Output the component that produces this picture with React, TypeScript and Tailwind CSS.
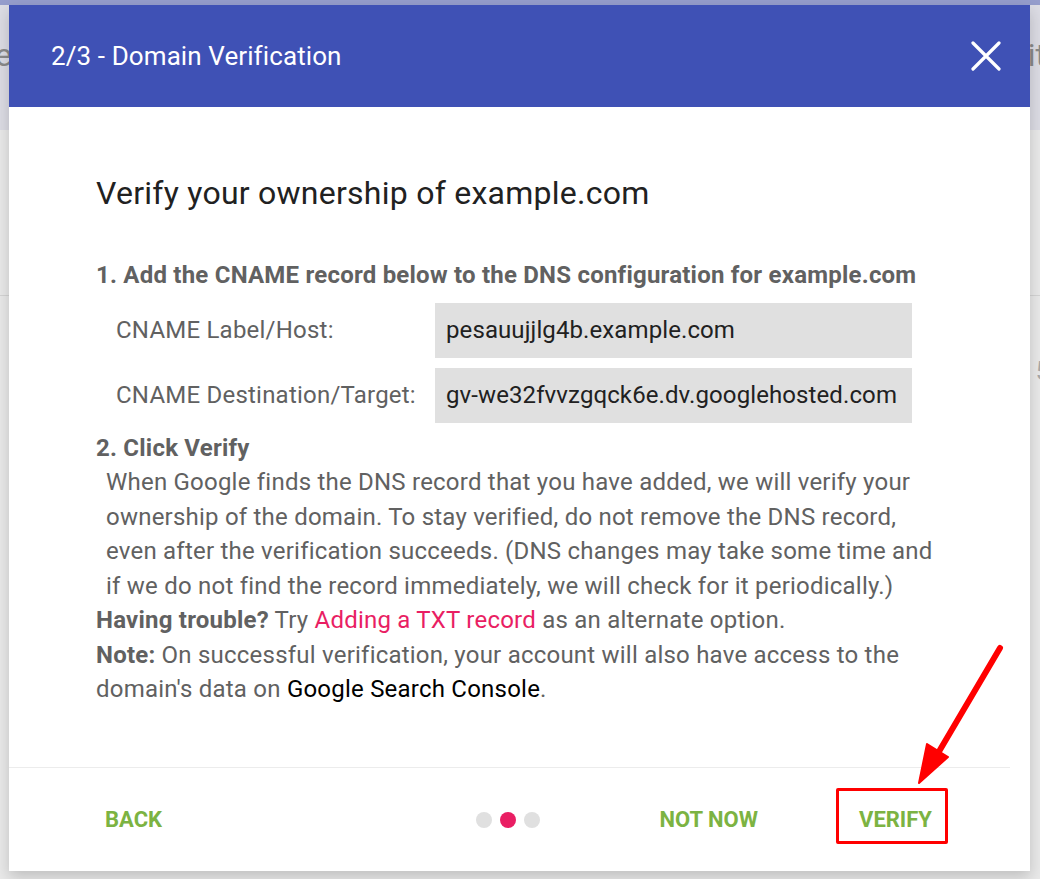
const steps = [0, 1, 2];

function CloseIcon() {
  return (
    <svg width="30" height="30" viewBox="0 0 30 30" fill="none">
      <path d="M2 2L28 28M28 2L2 28" stroke="white" strokeWidth="3.2" strokeLinecap="round" />
    </svg>
  );
}

export default function App() {
  return (
    <div className="relative w-[1040px] h-[879px] overflow-hidden bg-[#e9e9e9] font-['Roboto','Liberation_Sans',sans-serif]">
      {/* Dimmed page behind the dialog */}
      <div className="flex flex-col">
        <div className="h-[5px] bg-[#959dcc]" />
        <div className="h-[125px] bg-[#dcdce4] flex justify-between items-start pt-[32px] text-[32px] leading-[36px] text-[#8a8a8a]">
          <span className="ml-[-5px]">e</span>
          <span className="mr-[-6px]">it</span>
        </div>
        <div className="h-[165px]" />
        <div className="h-px bg-[#d4d4d4]" />
        <div className="flex justify-end pt-[56px] text-[26px] text-[#a8a8a8]">
          <span className="mr-[-10px]">5</span>
        </div>
      </div>

      {/* Dialog */}
      <div className="absolute left-[9px] top-[5px] w-[1021px] h-[866px] bg-white flex flex-col shadow-[0_6px_14px_rgba(0,0,0,0.18)]">
        <div className="h-[102px] shrink-0 bg-[#3f51b5] flex items-center justify-between pl-[42px] pr-[29px]">
          <h1 className="text-[26px] text-white tracking-[0.1px]">2/3 - Domain Verification</h1>
          <button type="button" aria-label="Close" className="p-0">
            <CloseIcon />
          </button>
        </div>

        <div className="flex-1 pl-[87px] pt-[68px] text-[24px] leading-[34.5px] tracking-[0.22px] text-[#616161]">
          <h2 className="text-[32px] leading-[36px] tracking-[0.25px] text-[#212121]">Verify your ownership of example.com</h2>

          <p className="mt-[47px] font-bold">1. Add the CNAME record below to the DNS configuration for example.com</p>
          <div className="mt-[10px] ml-[20px] grid grid-cols-[319px_477px] gap-y-[10px] items-center">
            <span>CNAME Label/Host:</span>
            <div className="h-[55px] bg-[#e0e0e0] flex items-center px-[11px] text-[#212121] tracking-[0.1px]">pesauujjlg4b.example.com</div>
            <span>CNAME Destination/Target:</span>
            <div className="h-[55px] bg-[#e0e0e0] flex items-center px-[11px] text-[#212121] tracking-[0.1px]">gv-we32fvvzgqck6e.dv.googlehosted.com</div>
          </div>

          <p className="mt-[8px] font-bold">2. Click Verify</p>
          <p className="ml-[10px] w-[834px]">
            When Google finds the DNS record that you have added, we will verify your ownership of the domain. To stay verified, do not remove the DNS record, even after the verification succeeds. (DNS changes may take some time and if we do not find the record immediately, we will check for it periodically.)
          </p>
          <p>
            <span className="font-bold">Having trouble?</span> Try <span className="text-[#e91e63]">Adding a TXT record</span> as an alternate option.
          </p>
          <p className="w-[850px]">
            <span className="font-bold">Note:</span> On successful verification, your account will also have access to the domain's data on <span className="text-black">Google Search Console</span>.
          </p>
        </div>

        <div className="h-px bg-[#ececec] mr-[20px]" />
        <div className="h-[103px] shrink-0 flex items-center pl-[96px] text-[22px] font-bold text-[#7cb342]">
          <div className="w-[371px]">
            <button type="button">BACK</button>
          </div>
          <div className="flex gap-[8px]">
            {steps.map((s) => (
              <span key={s} className={`w-[16px] h-[16px] rounded-full ${s === 1 ? 'bg-[#e91e63]' : 'bg-[#e0e0e0]'}`} />
            ))}
          </div>
          <div className="flex-1 flex justify-end items-center gap-[101px] pr-[98px]">
            <button type="button">NOT NOW</button>
            <button type="button">VERIFY</button>
          </div>
        </div>
      </div>

      {/* Annotation */}
      <div className="absolute left-[836px] top-[788px] w-[112px] h-[56px] border-[3px] border-[#ff0000] rounded-[2px]" />
      <svg className="absolute inset-0 pointer-events-none" width="1040" height="879" viewBox="0 0 1040 879">
        <line x1="1000" y1="648" x2="934" y2="760" stroke="#ff0000" strokeWidth="6" strokeLinecap="round" />
        <polygon points="919,783 927,744 948,757" fill="#ff0000" stroke="#ff0000" strokeWidth="2" strokeLinejoin="round" />
      </svg>
    </div>
  );
}
